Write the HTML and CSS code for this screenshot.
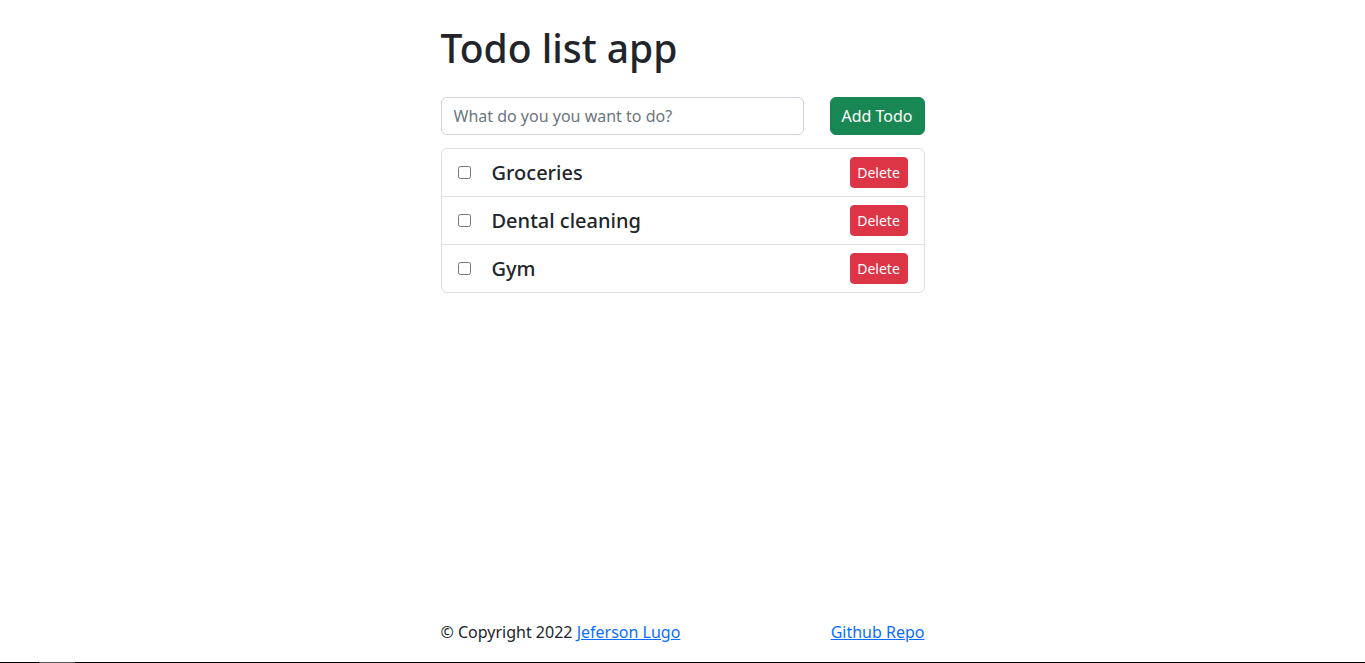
FILE: index.html
```html
<!DOCTYPE html>
<html lang="en">
<head>
<meta charset="utf-8">
<title>Todo list app</title>
<link rel="stylesheet" href="styles.css">
</head>
<body>
<div class="page">
  <main class="container">
    <h1 class="title">Todo list app</h1>
    <form class="add-form">
      <input class="todo-input" type="text" placeholder="What do you you want to do?">
      <button class="btn btn-add" type="button">Add Todo</button>
    </form>
    <ul class="todo-list">
      <li class="todo-item">
        <input class="todo-check" type="checkbox">
        <span class="todo-text">Groceries</span>
        <button class="btn btn-delete" type="button">Delete</button>
      </li>
      <li class="todo-item">
        <input class="todo-check" type="checkbox">
        <span class="todo-text">Dental cleaning</span>
        <button class="btn btn-delete" type="button">Delete</button>
      </li>
      <li class="todo-item">
        <input class="todo-check" type="checkbox">
        <span class="todo-text">Gym</span>
        <button class="btn btn-delete" type="button">Delete</button>
      </li>
    </ul>
  </main>
  <footer class="container footer">
    <span>© Copyright 2022 <a href="#" class="link">Jeferson Lugo</a></span>
    <a href="#" class="link">Github Repo</a>
  </footer>
</div>
<div class="bottom-edge"><span class="bottom-thumb"></span></div>
</body>
</html>
```

FILE: styles.css
```css
* { box-sizing: border-box; }
html, body { margin: 0; padding: 0; }
body {
  font-family: "Noto Sans", "Open Sans", sans-serif;
  color: #212529;
  background: #fff;
  font-size: 16px;
  line-height: 1.5;
}
.page {
  height: 662px;
  display: flex;
  flex-direction: column;
}
.container {
  width: 484px;
  margin: 0 auto;
}
main.container { flex: 1; }
.title {
  font-size: 39px;
  font-weight: 500;
  line-height: 48px;
  margin: 0;
  padding-top: 24px;
  margin-bottom: 25px;
}
.add-form {
  display: flex;
  gap: 26px;
  margin-bottom: 13px;
}
.todo-input {
  flex: 1;
  height: 38px;
  border: 1px solid #ced4da;
  border-radius: 6px;
  padding: 6px 12px;
  font: inherit;
  font-size: 16px;
  color: #212529;
}
.todo-input::placeholder { color: #6c757d; }
.btn {
  border: 1px solid transparent;
  font-family: inherit;
  color: #fff;
  cursor: pointer;
}
.btn-add {
  width: 95px;
  height: 38px;
  background: #198754;
  border-color: #198754;
  border-radius: 6px;
  font-size: 16px;
  padding: 0;
}
.todo-list {
  list-style: none;
  margin: 0;
  padding: 0;
  border: 1px solid #dee2e6;
  border-radius: 6px;
}
.todo-item {
  display: flex;
  align-items: center;
  height: 48px;
  padding: 0 16px;
  border-top: 1px solid #dee2e6;
}
.todo-item:first-child { border-top: 0; height: 47px; }
.todo-check {
  width: 13px;
  height: 13px;
  margin: 0 21px 0 0;
}
.todo-text {
  flex: 1;
  font-size: 20px;
  font-weight: 500;
}
.btn-delete {
  width: 58px;
  height: 31px;
  background: #dc3545;
  border-color: #dc3545;
  border-radius: 4px;
  font-size: 14px;
  padding: 0;
}
.footer {
  display: flex;
  justify-content: space-between;
  padding-bottom: 18px;
}
.link { color: #0d6efd; text-decoration: underline; }
.bottom-edge {
  position: fixed;
  left: 0;
  right: 0;
  bottom: 0;
  height: 1px;
  background: #000;
}
.bottom-thumb {
  position: absolute;
  left: 39px;
  width: 36px;
  height: 1px;
  background: #555;
}
```
